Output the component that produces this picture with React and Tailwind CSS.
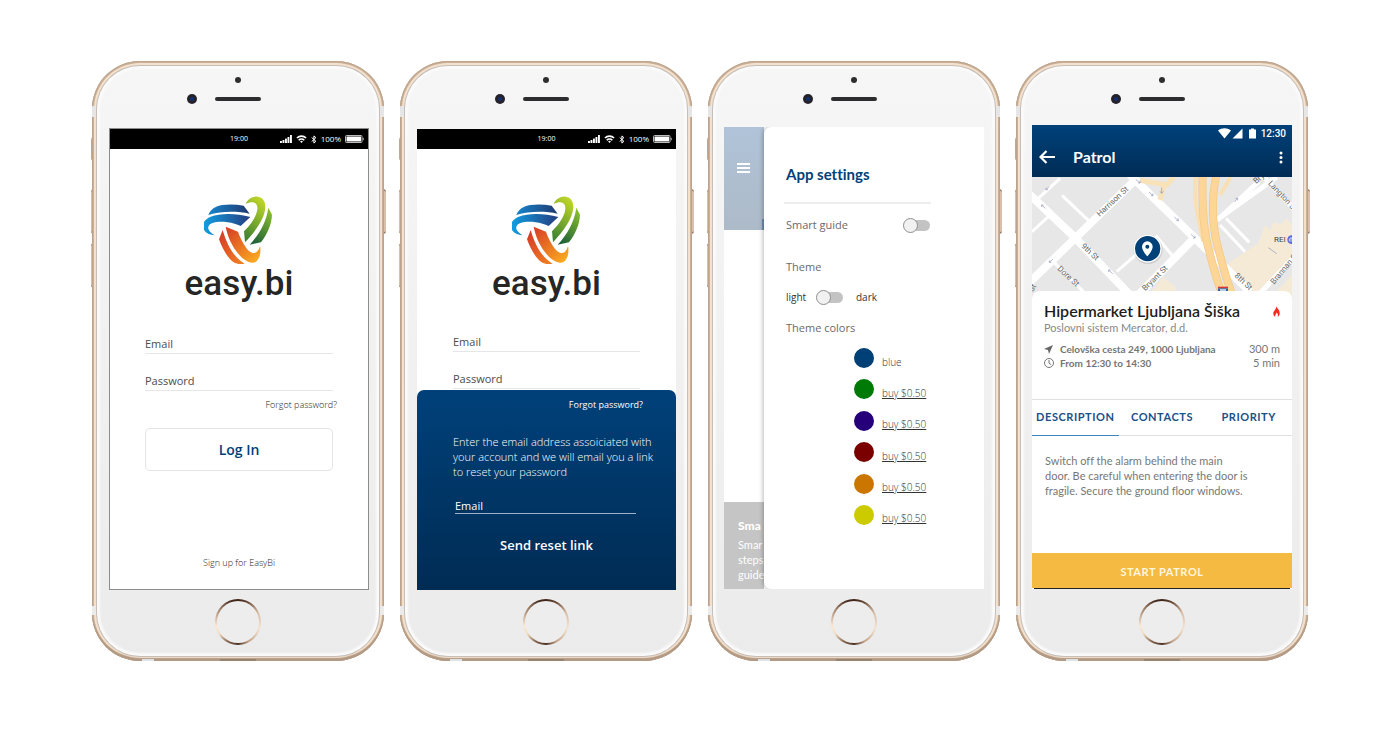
import React from "react";

const ui = "font-['Open_Sans','Noto_Sans',sans-serif]";
const geo = "font-['Lato','Open_Sans',sans-serif] [font-variant-ligatures:none]";

function Phone({ headerClass, screenClass, children }) {
  return (
    <section className="relative mx-auto w-full max-w-[292px]">
      <span className="absolute -left-px top-[76px] h-6 w-[3px] rounded-l-sm bg-[#c4a78e]" />
      <span className="absolute -left-px top-[128px] h-[45px] w-[3px] rounded-l-sm border-y-2 border-[#9b8069] bg-[#d9c0a8]" />
      <span className="absolute -left-px top-[182px] h-[45px] w-[3px] rounded-l-sm border-y-2 border-[#9b8069] bg-[#d9c0a8]" />
      <span className="absolute -right-0.5 top-[128px] h-[45px] w-[3px] rounded-r-sm border-y-2 border-[#9b8069] bg-[#d9c0a8]" />
      <div className="relative flex min-h-[600px] flex-col overflow-hidden rounded-[48px] bg-linear-to-b from-[#f6f6f6] to-[#ebebeb] shadow-[inset_0_-3px_1px_#b39a84,inset_0_0_0_1px_#bda58e,inset_0_0_0_2px_#cbb199,inset_0_0_0_4px_#f4e1cd,inset_0_0_0_5px_#c6beb7,inset_0_0_2px_8px_#fafafa]">
        <span className="absolute left-0 top-[45px] h-[11px] w-1 bg-[#e6e6e6]" />
        <span className="absolute right-0 top-[45px] h-[11px] w-1 bg-[#e6e6e6]" />
        <span className="absolute bottom-[46px] left-0 h-[9px] w-1 bg-[#ebebeb]" />
        <span className="absolute bottom-[46px] right-0 h-[9px] w-1 bg-[#ebebeb]" />
        <span className="absolute bottom-0 left-[50px] h-0.5 w-3 bg-[#dfe3e6]" />
        <span className="absolute bottom-0 left-32 h-0.5 w-9 bg-[#96836f]" />
        <div className={"shrink-0 pt-4 " + headerClass}>
          <div className="mx-auto size-1.5 rounded-full bg-[#2e2e30]" />
          <div className="mt-[11px] grid grid-cols-[1fr_46px_1fr] items-center">
            <span className="mr-[18px] flex size-2.5 items-center justify-center justify-self-end rounded-full bg-[#26222a]">
              <span className="size-1 rounded-full bg-[#12307a]" />
            </span>
            <span className="h-1 rounded-full bg-[#2d2d2f]" />
          </div>
        </div>
        <div className={"relative flex flex-col overflow-hidden bg-white " + screenClass}>{children}</div>
        <button
          type="button"
          aria-label="Home"
          className="mx-auto mt-auto mb-4 size-[46px] shrink-0 rounded-full bg-[conic-gradient(#3c2418,#6b4a38_8%,#d9bfa6_18%,#f6e2cc_30%,#c3a48b_42%,#4d3022_50%,#8a6a54_58%,#f3dcc4_66%,#fbe8d4_72%,#a98a72_84%,#4a2f22_94%,#3c2418)] p-0.5"
        >
          <span className="block size-full rounded-full bg-[#ededed]" />
        </button>
      </div>
    </section>
  );
}

function StatusBar() {
  return (
    <div className={"grid h-5 shrink-0 grid-cols-[1fr_auto_1fr] items-center bg-black pr-1 pl-1 text-white " + ui}>
      <span className="col-start-2 text-[7px]">19:00</span>
      <span className="flex items-center justify-end gap-1">
        <svg width="12" height="8" viewBox="0 0 12 8" fill="#fff">
          <rect x="0" y="6" width="1.9" height="2" />
          <rect x="2.5" y="5" width="1.9" height="3" />
          <rect x="5" y="3.6" width="1.9" height="4.4" />
          <rect x="7.5" y="2" width="1.9" height="6" />
          <rect x="10" y="0" width="1.9" height="8" />
        </svg>
        <svg width="11" height="8" viewBox="0 0 10 8" fill="none" stroke="#fff" strokeWidth="1.6">
          <path d="M.4 3A6.600 6.600 0 0 1 9.600 3M2.200 5.200A4 4 0 0 1 7.800 5.200" />
          <path d="M3.600 6.400A1.900 1.900 0 0 1 6.400 6.400L5 8Z" fill="#fff" stroke="none" />
        </svg>
        <svg width="6" height="9" viewBox="0 0 6 9" fill="none" stroke="#fff" strokeWidth="1">
          <path d="M.7 2.500 4.900 6.300 2.900 8.100V.9L4.900 2.700.7 6.500" />
        </svg>
        <span className="text-[8px]">100%</span>
        <svg width="19" height="8" viewBox="0 0 19 8">
          <rect x=".5" y=".5" width="16.500" height="7" rx="1" fill="none" stroke="#bbb" />
          <rect x="1.500" y="1.500" width="14.500" height="5" fill="#fff" />
          <rect x="17.700" y="2.800" width="1" height="2.400" fill="#bbb" />
        </svg>
      </span>
    </div>
  );
}

function Brand() {
  return (
    <div className="flex flex-col items-center">
      <svg width="70" height="69" viewBox="357 435 210 207" aria-hidden="true">
        <defs>
          <linearGradient id="blueTop" x1="0" x2="1">
            <stop offset="0" stopColor="#1685cd" />
            <stop offset="1" stopColor="#21396f" />
          </linearGradient>
          <linearGradient id="blueLow" x1="0" x2="1">
            <stop offset="0" stopColor="#0fa0e2" />
            <stop offset="1" stopColor="#253d80" />
          </linearGradient>
          <linearGradient id="greenTop" x1=".7" y1="0" x2=".3" y2="1">
            <stop offset="0" stopColor="#bfd62a" />
            <stop offset="1" stopColor="#3f8332" />
          </linearGradient>
          <linearGradient id="greenLow" x1=".8" y1="0" x2=".3" y2="1">
            <stop offset="0" stopColor="#8cc02c" />
            <stop offset="1" stopColor="#1f6238" />
          </linearGradient>
          <linearGradient id="redLeft" x1="0" y1="0" x2=".8" y2="1">
            <stop offset="0" stopColor="#d33629" />
            <stop offset="1" stopColor="#f07c22" />
          </linearGradient>
          <linearGradient id="redRight" x1="0" y1="0" x2=".9" y2="1">
            <stop offset="0" stopColor="#d53a26" />
            <stop offset="1" stopColor="#fbad20" />
          </linearGradient>
        </defs>
        <path fill="url(#blueTop)" d="M370 492C376 476 391 465 412 462C432 459 455 460 476 464L494 488C455 480 409 480 370 492Z" />
        <path fill="url(#blueLow)" d="M496 498C455 487 407 486 377 497C357 505 350 521 356 535C361 546 374 552 389 553C374 544 366 534 371 525C379 512 404 511 428 514C442 516 456 520 467 525Z" />
        <path fill="url(#greenTop)" d="M482 459C488 444 504 435 519 437C533 439 541 450 541 468C540 502 511 541 480 574L477 541C499 519 515 495 517 474C519 454 502 448 482 459Z" />
        <path fill="url(#greenLow)" d="M550 470L561 491C560 519 547 550 528 574L494 581C522 551 544 514 550 470Z" />
        <path fill="url(#redLeft)" d="M413 537L402 565C413 596 429 622 446 634C455 640 467 640 479 638C449 621 426 584 413 537Z" />
        <path fill="url(#redRight)" d="M422 527L459 542C467 565 481 591 495 602C509 612 520 603 525 585C529 605 524 624 512 633C497 640 477 629 461 610C441 586 428 558 422 527Z" />
      </svg>
      <span className="pt-0.5 font-['Roboto',sans-serif] text-[35px]/[34px] font-medium text-[#262626]">easy.bi</span>
    </div>
  );
}

const field = "h-[22px] w-full border-b border-[#e6e6e6] bg-transparent pt-0.5 text-[11px] font-normal text-[#444] placeholder-[#4c4c4c] outline-none";

function Credentials() {
  return (
    <>
      <input type="email" aria-label="Email" placeholder="Email" className={field} />
      <input type="password" aria-label="Password" placeholder="Password" className={field} />
    </>
  );
}

function LoginScreen() {
  return (
    <Phone headerClass="h-[67px]" screenClass="mr-[15px] ml-[17px] min-h-[462px] border border-[#8c8c8c]">
      <StatusBar />
      <main className={"flex flex-1 flex-col px-[35px] pt-[47px] " + ui}>
        <Brand />
        <form className="mt-[31px] flex flex-col gap-[15px]">
          <Credentials />
        </form>
        <a href="#forgot" className="-mr-1 mt-1.5 self-end text-[9px]/[15px] font-light text-[#222]">Forgot password?</a>
        <button type="button" className="mt-4 h-[43px] rounded-[5px] border border-[#e4e4e4] text-[14px] font-semibold text-[#003f77]">Log In</button>
        <a href="#signup" className="mt-auto mb-[18px] self-center text-[9px]/[16px] font-light text-[#222]">Sign up for EasyBi</a>
      </main>
    </Phone>
  );
}

function ResetScreen() {
  return (
    <Phone headerClass="h-[68px]" screenClass="mr-4 ml-[17px] min-h-[461px]">
      <StatusBar />
      <main className={"flex flex-1 flex-col px-9 pt-[47px] " + ui}>
        <Brand />
        <form className="mt-[29px] flex flex-col gap-[15px]">
          <Credentials />
        </form>
      </main>
      <div className={"absolute inset-x-0 bottom-0 flex h-[200px] flex-col rounded-t-[7px] bg-linear-to-b from-[#00417a] to-[#002c54] px-9 pt-[7px] text-white " + ui}>
        <a href="#forgot" className="mr-[-3px] self-end text-[9px]/[15px]">Forgot password?</a>
        <p className="mt-[22px] text-[11px]/[15px] font-light whitespace-nowrap">
          Enter the email address assoiciated with<br />your account and we will email you a link<br />to reset your password
        </p>
        <input type="email" aria-label="Account email" placeholder="Email" className="mt-[17px] mr-1 ml-0.5 h-[18px] border-b border-[#9fb2c7] bg-transparent pt-0.5 text-[11px] text-white placeholder-white outline-none" />
        <button type="button" className="mt-5 self-center text-[13px]/[22px] font-semibold">Send reset link</button>
      </div>
    </Phone>
  );
}

function Toggle({ label }) {
  return (
    <input
      type="checkbox"
      aria-label={label}
      className="relative h-[11px] w-[26px] shrink-0 appearance-none rounded-full bg-[#c3c3c3] before:absolute before:-top-0.5 before:-left-px before:size-[15px] before:rounded-full before:border before:border-[#8f8f8f] before:bg-[#f1f1f1] before:content-['']"
    />
  );
}

const themeColors = [
  ["bg-[#004077]", "blue"],
  ["bg-[#007a07]", "buy $0.50"],
  ["bg-[#25007a]", "buy $0.50"],
  ["bg-[#7a0000]", "buy $0.50"],
  ["bg-[#cb7600]", "buy $0.50"],
  ["bg-[#cbcb00]", "buy $0.50"],
];

function SettingsScreen() {
  return (
    <Phone headerClass="h-[66px]" screenClass="mx-4 min-h-[462px]">
      <div className="flex flex-1">
        <div className="flex w-10 shrink-0 flex-col">
          <div className="flex h-[103px] items-end bg-linear-to-b from-[#b0c3d8] to-[#adbac8]">
            <button type="button" aria-label="Menu" className="mb-[57px] ml-[13px] flex w-[13px] flex-col gap-0.5">
              <span className="h-0.5 bg-white" />
              <span className="h-0.5 bg-white" />
              <span className="h-0.5 bg-white" />
            </button>
            <span className="ml-auto h-[11px] w-0.5 bg-[#6f8fae]" />
          </div>
          <div className={"mt-auto h-[87px] bg-[#c5c5c5] pt-4 pl-[14px] whitespace-nowrap text-white " + geo}>
            <h3 className="text-[12px]/[16px] font-black">Sma</h3>
            <p className="mt-[3px] text-[11px]/[15px]">Smar<br />steps<br />guide</p>
          </div>
        </div>
        <main className={"z-10 flex flex-1 flex-col rounded-l-[7px] bg-white pr-[54px] pl-[22px] text-[11px] text-[#6a6a6a] shadow-[-1px_0_4px_rgba(0,0,0,0.28)] " + ui}>
          <h2 className={"mt-[37px] text-[15px]/[20px] font-bold text-[#00417a] " + geo}>App settings</h2>
          <hr className="-mr-px -ml-0.5 mt-[18px] border-t-2 border-[#ededed]" />
          <div className="mt-[11px] flex h-5 items-center justify-between">
            <span>Smart guide</span>
            <Toggle label="Smart guide" />
          </div>
          <h3 className="mt-[22px] leading-5">Theme</h3>
          <div className="mt-2.5 flex h-5 items-center text-[10px] text-[#333]">
            <span className="w-[31px]">light</span>
            <Toggle label="Dark theme" />
            <span className="ml-[13px]">dark</span>
          </div>
          <h3 className="mt-[11px] leading-5">Theme colors</h3>
          <ul className="mt-2.5 ml-[68px] flex h-[177px] flex-col justify-between">
            {themeColors.map(([swatch, name], i) => (
              <li key={i} className="flex h-5 items-center gap-2">
                <span className={"size-5 shrink-0 rounded-full " + swatch} />
                {i === 0 ? (
                  <span className="pt-[7px] text-[10px]/[14px] font-light text-[#333]">{name}</span>
                ) : (
                  <a href="#buy" className="pt-[7px] text-[10px]/[14px] font-light whitespace-nowrap text-[#333] underline">{name}</a>
                )}
              </li>
            ))}
          </ul>
        </main>
      </div>
    </Phone>
  );
}

function MapView() {
  return (
    <svg className="h-[122px] w-full shrink-0" viewBox="36 186 780 366" preserveAspectRatio="xMidYMin slice" fontFamily="Roboto, sans-serif" fontSize="24" fill="#666">
      <rect x="0" y="150" width="860" height="420" fill="#e7e7e7" />
      <path d="M622 447 715 385 735 330 750 345 762 320 780 330 800 310 816 330V440L730 528H690Z" fill="#f5ead6" />
      <path d="M770 528 816 480V560H740ZM395 528 430 487 470 520 455 540Z" fill="#f5ead6" />
      <g fill="none" stroke="#fff">
        <path strokeWidth="24" d="M355 186 160 375 0 530M20 230 165 368 330 540M330 180 520 365 690 530M520 372 350 545" />
        <path strokeWidth="15" d="M770 186 590 315M716 180 735 190 830 290M716 200 596 312M816 432 720 535" />
        <path strokeWidth="9" d="M126 241 205 316M36 350 85 305M55 250 120 190M100 440 190 530M290 470 410 365 460 425M618 310 688 382M600 330 675 410" />
      </g>
      <path d="M360 196 440 210 462 186M434 205 420 255" fill="none" stroke="#f8e2b8" strokeWidth="15" />
      <g fill="none">
        <path strokeWidth="12" stroke="#f9e0b4" d="M527 186C520 260 535 310 550 380M632 186 600 240" />
        <path strokeWidth="24" stroke="#f3c884" d="M548 176C545 280 550 350 568 410 580 460 590 500 612 550M590 176C570 260 578 350 600 420 610 460 622 500 640 550" />
        <path strokeWidth="20" stroke="#fdd596" d="M548 176C545 280 550 350 568 410 580 460 590 500 612 550M590 176C570 260 578 350 600 420 610 460 622 500 640 550" />
      </g>
      <g stroke="#8e94b8" strokeWidth="2" fill="none">
        <path d="M347 193 360 204M360 204H354M360 204V197M387 231 399 242M399 242H393M399 242V235M463 306 475 317M475 317H469M475 317V310M513 358 525 369M525 369H519M525 369V362M278 476 266 465M266 465H272M266 465V471M76 280 65 270M65 270H71M65 270V276M88 442 98 433M88 442V436M88 442H94M78 224 88 214M78 224V218M78 224H84M643 261 653 250M653 250H647M653 250V256M425 218V235M420 229 425 235 430 229M745 398 770 416" />
      </g>
      <text transform="translate(239 306) rotate(-43)">Harrison St</text>
      <text transform="translate(182 395) rotate(43)">9th St</text>
      <text transform="translate(111 463) rotate(43)">Dore St</text>
      <text transform="translate(376 529) rotate(-45)">Bryant St</text>
      <text transform="translate(642 484) rotate(43)">8th St</text>
      <text transform="translate(743 206) rotate(47)">Langton St</text>
      <text transform="translate(708 207) rotate(-40)">Bryant</text>
      <text transform="translate(762 509) rotate(-50)">Brannan St</text>
      <text transform="translate(38 532) rotate(-60)">St</text>
      <text x="762" y="382" fill="#444">REI</text>
      <circle cx="815" cy="374" r="13" fill="#5869d8" />
      <path d="M808 378V372H818V378ZM810 371A3 3 0 0 1 816 371" stroke="#fff" strokeWidth="2" fill="none" />
      <path d="M594 515H624V520H594Z" fill="#d3353b" />
      <path d="M594 520H624V540H594Z" fill="#2f5fae" />
      <path d="M600 525H618" stroke="#fff" strokeWidth="4" />
      <circle cx="384" cy="403" r="44" fill="#000" opacity=".12" />
      <circle cx="383" cy="401" r="42" fill="#fff" />
      <circle cx="383" cy="401" r="38" fill="#00417a" />
      <path fillRule="evenodd" fill="#fff" d="M382 379A16 16 0 0 0 366 395C366 407 382 424 382 424S398 407 398 395A16 16 0 0 0 382 379ZM382 389A6 6 0 1 1 382 401 6 6 0 0 1 382 389Z" />
    </svg>
  );
}

const tab = "h-[36px] border-b text-center text-[11px] font-bold tracking-wider text-[#1b5088] ";

function PatrolScreen() {
  return (
    <Phone headerClass="h-16" screenClass={"mx-4 min-h-[464px] " + geo}>
      <header className="flex h-[52px] shrink-0 flex-col bg-linear-to-b from-[#00417a] to-[#002c55] text-white">
        <div className="flex h-[17px] items-center justify-end pr-1.5">
          <svg width="39" height="11" viewBox="0 0 39 11" fill="#fff">
            <path d="M0 2.500C4 -.4 9 -.4 13 2.500L6.500 10.500ZM24.500.5V10.500H14.500ZM31 1.500H33V.5H36V1.500H38V10.500H31Z" />
          </svg>
          <span className="ml-1 font-['Roboto',sans-serif] text-[10px] font-medium">12:30</span>
        </div>
        <div className="flex h-[29px] items-center pr-2 pl-[7px]">
          <button type="button" aria-label="Back">
            <svg width="16" height="14" viewBox="0 0 16 14" fill="none" stroke="#fff" strokeWidth="2.200">
              <path d="M7.500 1 1.500 7 7.500 13M1.500 7H16" />
            </svg>
          </button>
          <h1 className="ml-[18px] text-[16px] font-bold">Patrol</h1>
          <button type="button" aria-label="More" className="ml-auto pt-0.5">
            <svg width="6" height="13" viewBox="0 0 6 13" fill="#fff">
              <circle cx="3" cy="2" r="1.500" />
              <circle cx="3" cy="6.500" r="1.500" />
              <circle cx="3" cy="11" r="1.500" />
            </svg>
          </button>
        </div>
      </header>
      <MapView />
      <main className="relative -mt-2 flex flex-1 flex-col rounded-t-lg bg-white">
        <div className="h-[108px] px-3 pt-2.5 text-[#777]">
          <div className="flex items-center justify-between">
            <h2 className="text-[16px]/[20px] font-semibold whitespace-nowrap text-[#1c1c1c]">Hipermarket Ljubljana Šiška</h2>
            <svg width="7" height="11" viewBox="0 0 8 12" fill="#f52d20">
              <path d="M3.800 0C4.600 2.300 7.700 4.200 7.700 8 7.700 10 6.600 11.300 5.400 12 6 9.800 5.400 8.200 4.200 7 3.900 8.600 2.100 9.400 2.500 12 1.100 11.200.3 10 .3 8.300.3 5.300 3.900 3.600 3.800 0Z" />
            </svg>
          </div>
          <p className="text-[11px]/[14px] text-[#888]">Poslovni sistem Mercator, d.d.</p>
          <div className="mt-[7px] flex h-[14px] items-center">
            <svg width="9" height="9" viewBox="0 0 9 9" fill="#666">
              <path d="M9 0 5 9 4 5 0 4Z" />
            </svg>
            <span className="ml-[7px] text-[10px] font-bold text-[#757575]">Celovška cesta 249, 1000 Ljubljana</span>
            <span className="ml-auto text-[11px]">300 m</span>
          </div>
          <div className="flex h-[14px] items-center">
            <svg width="10" height="10" viewBox="0 0 10 10" fill="none" stroke="#777">
              <circle cx="5" cy="5" r="4.500" />
              <path d="M5 2V5.200L7.200 6.600" />
            </svg>
            <span className="ml-1.5 text-[10px] font-bold text-[#757575]">From 12:30 to 14:30</span>
            <span className="ml-auto text-[11px]">5 min</span>
          </div>
        </div>
        <nav className="grid grid-cols-3 border-t border-[#e0e0e0]">
          <button type="button" className={tab + "border-[#3f87c2]"}>DESCRIPTION</button>
          <button type="button" className={tab + "border-[#e0e0e0]"}>CONTACTS</button>
          <button type="button" className={tab + "border-[#e0e0e0]"}>PRIORITY</button>
        </nav>
        <p className="px-[13px] pt-[17px] text-[11px]/[15px] text-[#777]">
          Switch off the alarm behind the main<br />door. Be careful when entering the door is<br />fragile. Secure the ground floor windows.
        </p>
        <button type="button" className="mt-auto h-[35px] bg-[#f5ba42] pt-1 text-[11px] font-bold tracking-wider text-[#fff6dd]">START PATROL</button>
        <div className="mx-0.5 h-px bg-[#222]" />
      </main>
    </Phone>
  );
}

export default function App() {
  return (
    <div className="min-h-screen bg-white px-4 pt-[61px] pb-12">
      <div className="mx-auto grid max-w-[1216px] grid-cols-1 items-start gap-4 sm:grid-cols-2 lg:grid-cols-4">
        <LoginScreen />
        <ResetScreen />
        <SettingsScreen />
        <PatrolScreen />
      </div>
    </div>
  );
}
